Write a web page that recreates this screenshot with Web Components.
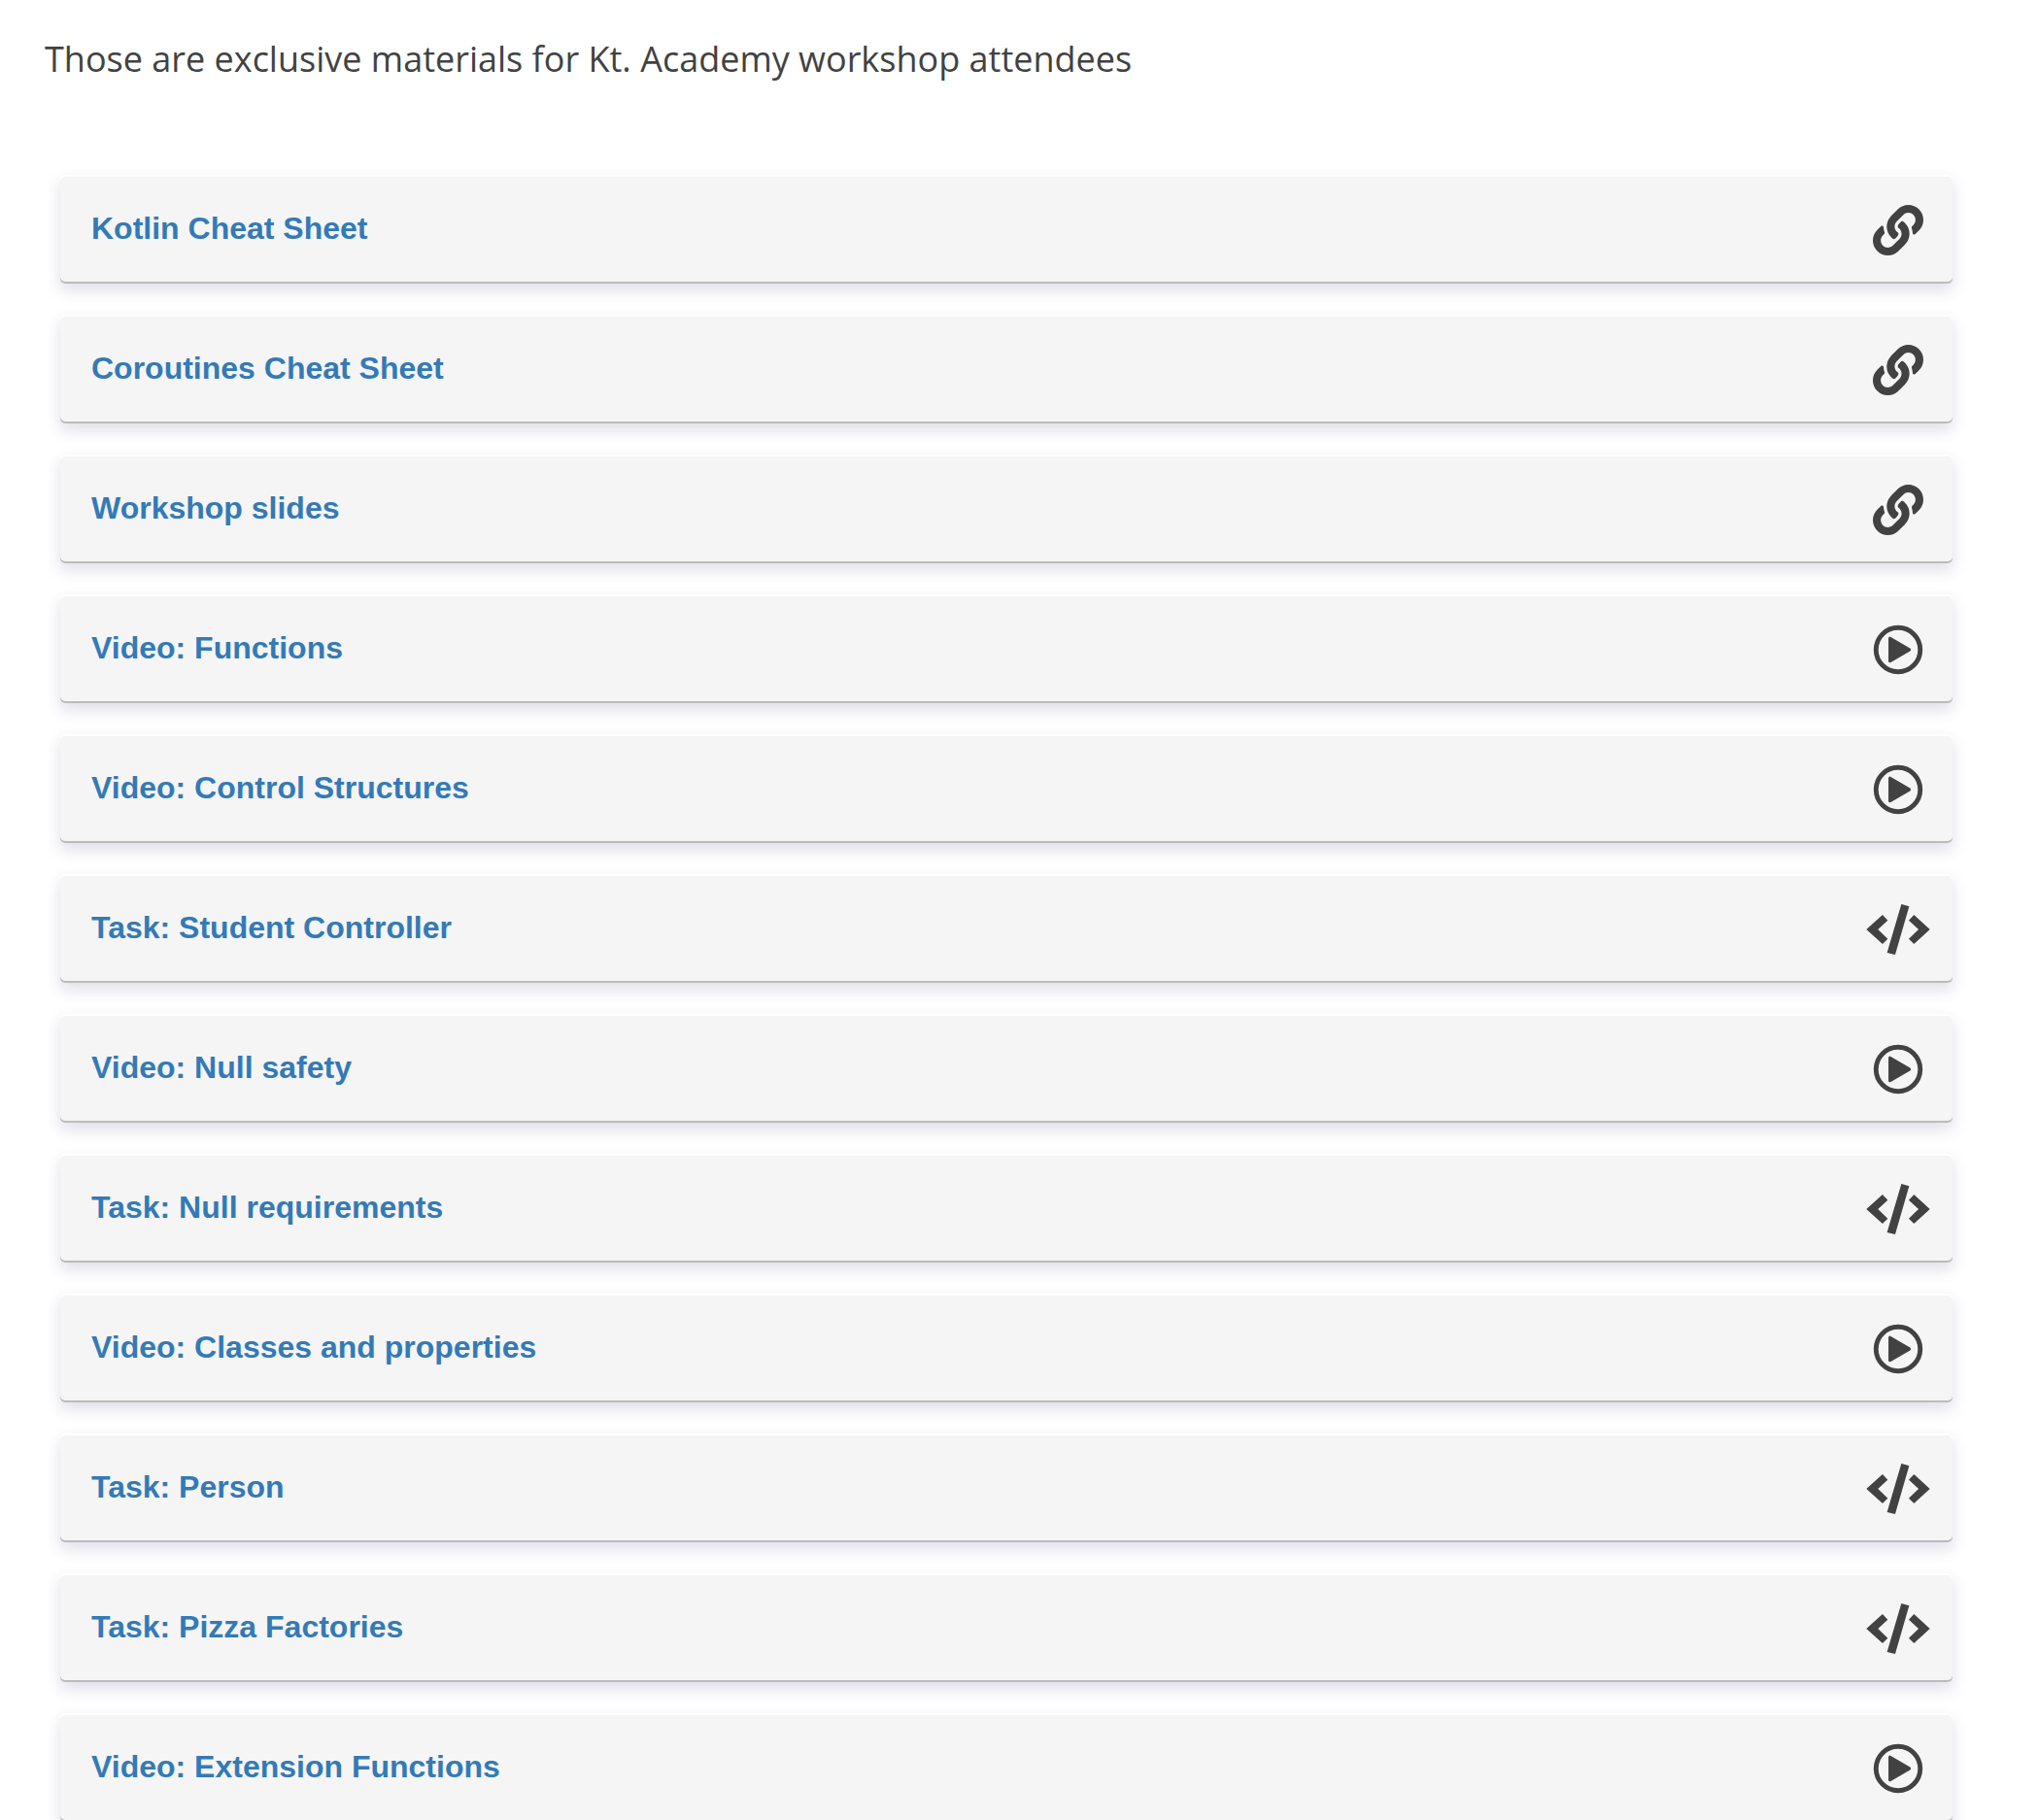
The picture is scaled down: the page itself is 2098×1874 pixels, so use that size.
<!DOCTYPE html>
<html lang="en">
<head>
<meta charset="utf-8">
<title>Workshop materials</title>
<style>
body { margin: 0; background: #fff; color: #424242; }
</style>
</head>
<body>
<materials-page>
  <span slot="intro">Those are exclusive materials for Kt. Academy workshop attendees</span>
  <material-card kind="link">Kotlin Cheat Sheet</material-card>
  <material-card kind="link">Coroutines Cheat Sheet</material-card>
  <material-card kind="link">Workshop slides</material-card>
  <material-card kind="video">Video: Functions</material-card>
  <material-card kind="video">Video: Control Structures</material-card>
  <material-card kind="code">Task: Student Controller</material-card>
  <material-card kind="video">Video: Null safety</material-card>
  <material-card kind="code">Task: Null requirements</material-card>
  <material-card kind="video">Video: Classes and properties</material-card>
  <material-card kind="code">Task: Person</material-card>
  <material-card kind="code">Task: Pizza Factories</material-card>
  <material-card kind="video">Video: Extension Functions</material-card>
</materials-page>

<template id="page-template">
  <style>
    :host { display: block; padding: 36px 88px 0 46px; }
    p { margin: 0; font: 36px/50px "Open Sans", "Noto Sans", sans-serif; }
    .list { display: flex; flex-direction: column; gap: 32px; margin: 94px 0 0 16px; }
  </style>
  <main>
    <p><slot name="intro"></slot></p>
    <div class="list"><slot></slot></div>
  </main>
</template>

<template id="card-template">
  <style>
    :host { display: block; }
    a {
      display: flex; align-items: center; justify-content: space-between;
      box-sizing: border-box; height: 112px; padding: 2px 24px 0 32px;
      border-radius: 5px; background: #f5f5f5; color: #337ab7; text-decoration: none;
      font: bold 32px/44px "Liberation Sans", Arial, sans-serif;
      box-shadow: inset 0 2px #fff, inset 0 -2px #bbb, 0 7px 16px rgba(50, 50, 110, .16);
    }
    span { padding-bottom: 4px; }
    material-icon { flex: none; }
  </style>
  <a href="#"><span><slot></slot></span><material-icon></material-icon></a>
</template>

<script>
const ICONS = {
  link: '<path d="M326.612 185.391c59.747 59.809 58.927 155.698.36 214.59-.11.12-.24.25-.36.37l-67.2 67.2c-59.27 59.27-155.699 59.262-214.96 0-59.27-59.26-59.27-155.7 0-214.96l37.106-37.106c9.84-9.84 26.786-3.3 27.294 10.606.648 17.722 3.826 35.527 9.69 52.721 1.986 5.822.567 12.262-3.783 16.612l-13.087 13.087c-28.026 28.026-28.905 73.66-1.155 101.96 28.024 28.579 74.086 28.749 102.325.51l67.2-67.19c28.191-28.191 28.073-73.757 0-101.83-3.701-3.694-7.429-6.564-10.341-8.569a16.037 16.037 0 0 1-6.947-12.606c-.396-10.567 3.348-21.456 11.698-29.806l21.054-21.055c5.521-5.521 14.182-6.199 20.584-1.731a152.482 152.482 0 0 1 20.522 17.197zM467.547 44.449c-59.261-59.262-155.69-59.27-214.96 0l-67.2 67.2c-.12.12-.25.25-.36.37-58.566 58.892-59.387 154.781.36 214.59a152.454 152.454 0 0 0 20.521 17.196c6.402 4.468 15.064 3.789 20.584-1.731l21.054-21.055c8.35-8.35 12.094-19.239 11.698-29.806a16.037 16.037 0 0 0-6.947-12.606c-2.912-2.005-6.64-4.875-10.341-8.569-28.073-28.073-28.191-73.639 0-101.83l67.2-67.19c28.239-28.239 74.3-28.069 102.325.51 27.75 28.3 26.872 73.934-1.155 101.96l-13.087 13.087c-4.35 4.35-5.769 10.79-3.783 16.612 5.864 17.194 9.042 34.999 9.69 52.721.509 13.906 17.454 20.446 27.294 10.606l37.106-37.106c59.271-59.259 59.271-155.699.001-214.959z"/>',
  video: '<circle cx="256" cy="256" r="224" fill="none" stroke="currentColor" stroke-width="48"/><path stroke="currentColor" stroke-width="32" stroke-linejoin="round" d="M174 141v230l195-115z"/>',
  code: '<path d="M289 0l79 23-142 489-82-20zM-66 256L98 108l53 56-99 92 99 95-53 53zM578 256L417 108l-53 56 99 92-99 95 53 53z"/>'
};

class MaterialIcon extends HTMLElement {
  constructor() { super(); this.attachShadow({ mode: 'open' }); }
  static get observedAttributes() { return ['kind']; }
  attributeChangedCallback(name, old, kind) {
    this.shadowRoot.innerHTML = `<style>
      :host { display: block; color: #424242; }
      svg { display: block; width: 64px; height: 52px; overflow: visible; fill: currentColor; }
    </style><svg viewBox="0 0 512 512" aria-hidden="true">${ICONS[kind]}</svg>`;
  }
}
class MaterialCard extends HTMLElement {
  constructor() {
    super();
    this.attachShadow({ mode: 'open' }).append(document.getElementById('card-template').content.cloneNode(true));
  }
  connectedCallback() {
    this.shadowRoot.querySelector('material-icon').setAttribute('kind', this.getAttribute('kind'));
  }
}
class MaterialsPage extends HTMLElement {
  constructor() {
    super();
    this.attachShadow({ mode: 'open' }).append(document.getElementById('page-template').content.cloneNode(true));
  }
}
customElements.define('material-icon', MaterialIcon);
customElements.define('material-card', MaterialCard);
customElements.define('materials-page', MaterialsPage);
</script>
</body>
</html>
